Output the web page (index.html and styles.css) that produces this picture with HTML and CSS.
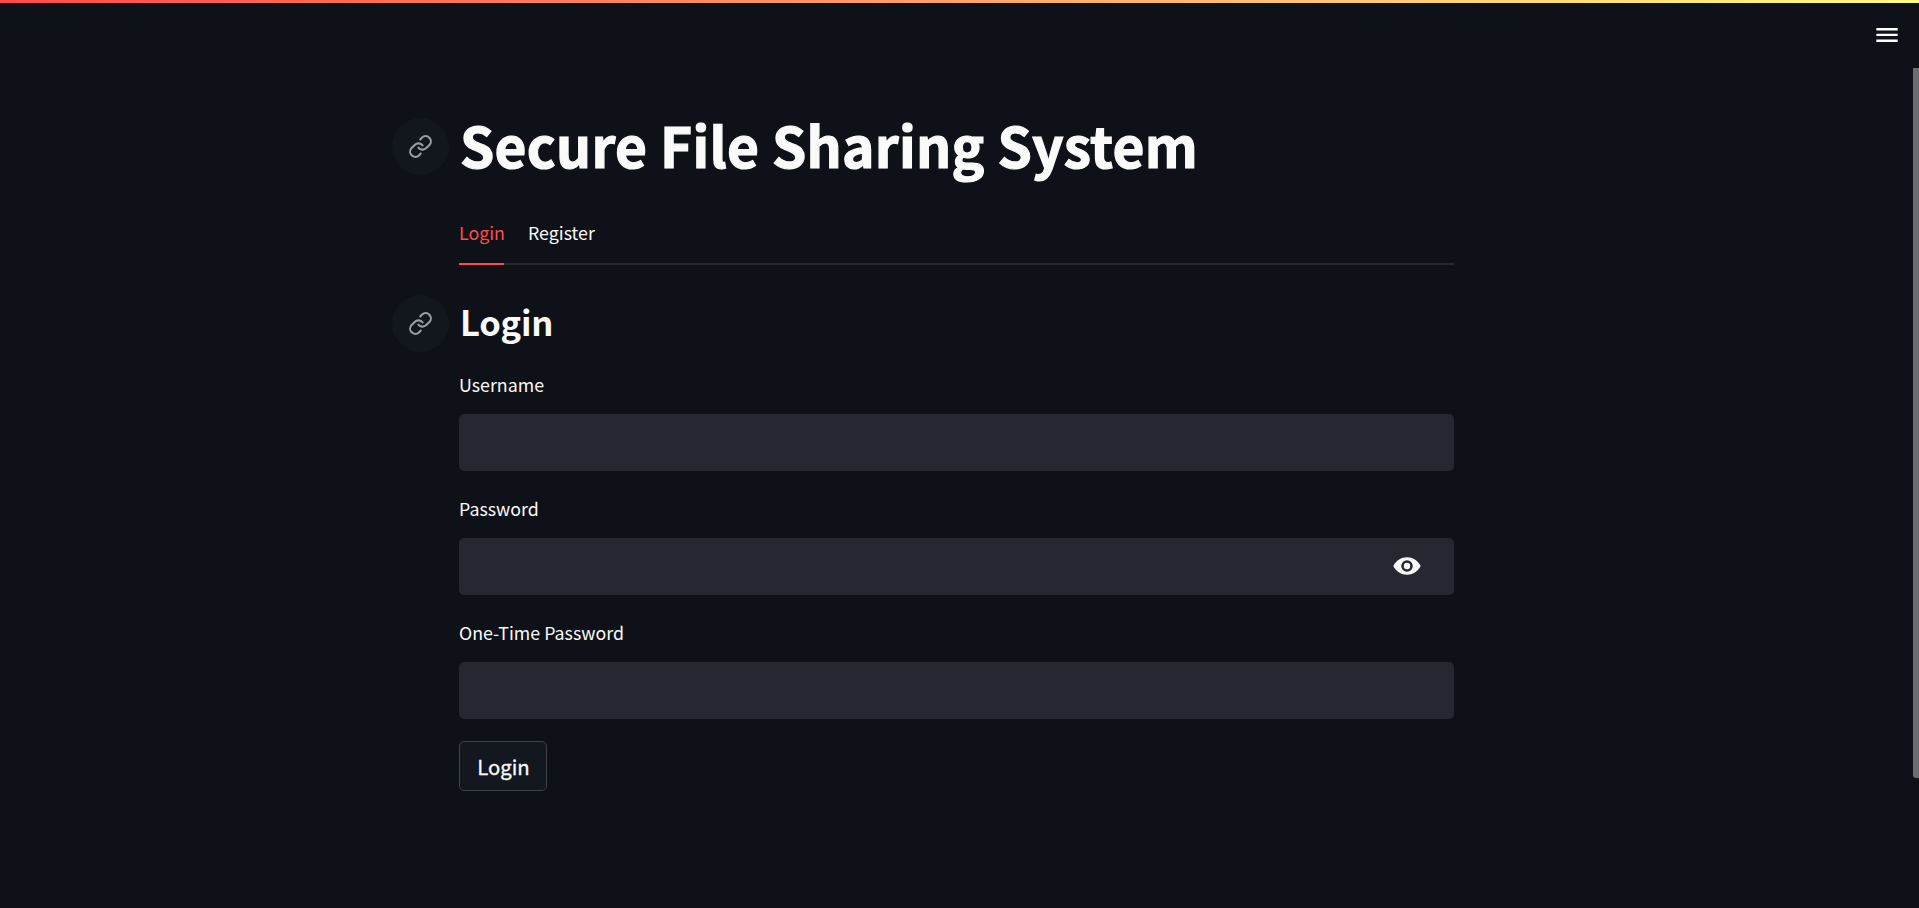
FILE: index.html
```html
<!DOCTYPE html>
<html lang="en">
<head>
<meta charset="utf-8">
<title>Secure File Sharing System</title>
<link rel="stylesheet" href="styles.css">
</head>
<body>
<div class="decoration"></div>
<header class="toolbar">
  <svg class="menu-icon" viewBox="0 0 22 14"><path d="M.35 0h21.300v2.400H.35zM.35 5.700h21.300v2.400H.35zM.35 11.500h21.300v2.400H.35z"/></svg>
</header>
<div class="scrollbar"></div>
<main class="content">
  <div class="heading-row title-row">
    <a class="anchor"><svg class="link-icon" viewBox="0 0 24 24"><path d="M10 13a5 5 0 0 0 7.54.54l3-3a5 5 0 0 0-7.07-7.07l-1.72 1.71"/><path d="M14 11a5 5 0 0 0-7.54-.54l-3 3a5 5 0 0 0 7.07 7.07l1.71-1.71"/></svg></a>
    <h1 class="title">Secure File Sharing System</h1>
  </div>
  <nav class="tabs">
    <a class="tab tab-active">Login</a>
    <a class="tab">Register</a>
  </nav>
  <div class="heading-row section-row">
    <a class="anchor"><svg class="link-icon" viewBox="0 0 24 24"><path d="M10 13a5 5 0 0 0 7.54.54l3-3a5 5 0 0 0-7.07-7.07l-1.72 1.71"/><path d="M14 11a5 5 0 0 0-7.54-.54l-3 3a5 5 0 0 0 7.07 7.07l1.71-1.71"/></svg></a>
    <h2 class="subtitle">Login</h2>
  </div>
  <form class="form">
    <div class="field"><label class="label">Username</label><div class="input"></div></div>
    <div class="field"><label class="label">Password</label><div class="input">
      <svg class="eye-icon" viewBox="0 0 28 18"><path fill-rule="evenodd" d="M.3 9C3.200 3.200 8.400.3 14 .3s10.800 2.900 13.700 8.700c-2.900 5.800-8.100 8.700-13.700 8.700S3.200 14.800.3 9zM14 3.200a5.800 5.800 0 1 0 0 11.600a5.800 5.800 0 1 0 0-11.600z"/><circle cx="14" cy="9" r="3.200"/></svg>
    </div></div>
    <div class="field"><label class="label">One-Time Password</label><div class="input"></div></div>
    <button class="button" type="button">Login</button>
  </form>
</main>
</body>
</html>
```
FILE: styles.css
```css
* { box-sizing: border-box; }

body {
  margin: 0;
  height: 908px;
  overflow: hidden;
  background: #0e1117;
  color: #fafafa;
  font-family: "Noto Sans CJK SC", "Noto Sans", sans-serif;
  font-size: 17.8px;
}

.decoration {
  height: 3px;
  background: linear-gradient(90deg, #ff4b4b, #fffd80);
}

.toolbar {
  display: flex;
  justify-content: flex-end;
  height: 65px;
  padding: 25px 21px 0 0;
}

.menu-icon { width: 22px; height: 14px; fill: #fff; }

/* Overlay scrollbar thumb */
.scrollbar {
  position: absolute;
  top: 68px;
  right: 0;
  width: 6px;
  height: 710px;
  background: #6b6c70;
  border-radius: 0 0 0 3px;
}

.content { width: 995px; margin-left: 459px; padding-top: 50px; }

.heading-row {
  display: flex;
  align-items: center;
  gap: 10px;
  height: 57px;
  margin-left: -67px;
}

.anchor {
  display: flex;
  align-items: center;
  justify-content: center;
  flex: none;
  width: 57px;
  height: 57px;
  border-radius: 50%;
  background: #12161d;
}

.link-icon {
  width: 25px;
  height: 25px;
  fill: none;
  stroke: #9d9ea1;
  stroke-width: 2;
  stroke-linecap: round;
  stroke-linejoin: round;
}

.title, .subtitle { margin: 0; font-weight: 700; white-space: nowrap; }

.title {
  padding: 0 0 6px 1px;
  font-size: 55px;
  line-height: 50px;
  letter-spacing: 0.27px;
  -webkit-text-stroke: 1.2px #fafafa;
}

.subtitle {
  padding: 0 0 5px 1px;
  font-size: 34.5px;
  line-height: 48px;
  letter-spacing: -0.2px;
}

.tabs {
  display: flex;
  gap: 24px;
  height: 67px;
  margin-top: 23px;
  border-bottom: 2px solid #262a30;
}

.tab { height: 67px; padding-top: 21px; line-height: 26px; }
.tab-active { width: 45px; color: #ff4b4b; border-bottom: 2px solid #ff4b4b; }

.section-row { margin-top: 30px; }

.form { padding-top: 19px; }
.field { margin-bottom: 22px; }
.label { display: block; height: 43px; line-height: 26px; }
.field + .field .label { height: 45px; padding-top: 2px; }

.input {
  display: flex;
  align-items: center;
  justify-content: flex-end;
  height: 57px;
  padding-right: 33px;
  background: #262730;
  border-radius: 5px;
}

.eye-icon { width: 28px; height: 18px; margin-bottom: 1px; fill: #fafafa; }

.button {
  display: flex;
  align-items: center;
  justify-content: center;
  width: 88px;
  height: 50px;
  padding: 0 0 1px 1px;
  color: #fafafa;
  font: 400 20.3px/30px "Noto Sans CJK SC", "Noto Sans", sans-serif;
  -webkit-text-stroke: 0.3px #fafafa;
  background: #131720;
  border: 1px solid #41434a;
  border-radius: 5px;
}
```
